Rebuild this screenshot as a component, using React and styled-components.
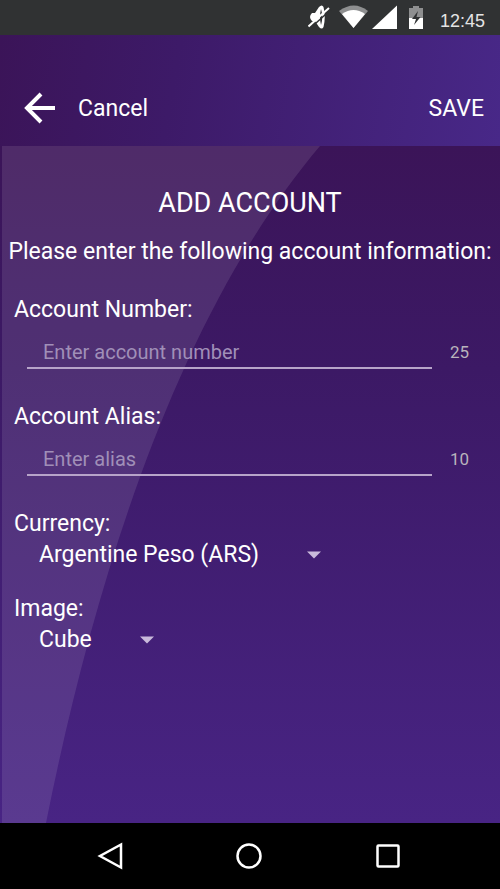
import React from "react";
import styled, { createGlobalStyle } from "styled-components";

const GlobalStyle = createGlobalStyle`
  *, *::before, *::after { box-sizing: border-box; }
  body {
    margin: 0;
    background: #000;
    color: #fff;
    font-family: Roboto, "Noto Sans", sans-serif;
    font-size: 23px;
    line-height: 28px;
  }
  button, input, select { font: inherit; color: inherit; }
`;

const Screen = styled.div`
  display: flex;
  flex-direction: column;
  min-height: 100vh;
`;

const StatusBar = styled.div`
  display: flex;
  align-items: center;
  justify-content: flex-end;
  height: 35px;
  padding-right: 15px;
  background: #303233;
`;

const StatusIcons = styled.svg`
  display: block;
  margin-right: 14px;
`;

const Clock = styled.time`
  padding-top: 6px;
  color: #e4e4e4;
  font-family: "Liberation Sans", Arial, sans-serif;
  font-size: 18px;
`;

const AppBar = styled.header`
  display: flex;
  align-items: flex-end;
  justify-content: space-between;
  height: 111px;
  padding: 0 16px 20px 24px;
  background: linear-gradient(100deg, #3b1458 0%, #3d1a68 35%, #482888 100%);
`;

const BarButton = styled.button`
  display: flex;
  align-items: center;
  gap: 22px;
  height: 36px;
  padding: 0;
  border: 0;
  background: none;
  cursor: pointer;
`;

const BarText = styled.span`
  padding-top: 2px;
`;

const Content = styled.main`
  position: relative;
  isolation: isolate;
  flex: 1;
  padding: 41px 14px;
  background: linear-gradient(#3b1458 0%, #3c1965 33%, #482484 100%);
`;

const Swoosh = styled.svg`
  position: absolute;
  inset: 0;
  z-index: -1;
  width: 100%;
  height: 100%;
`;

const Title = styled.h1`
  margin: 0;
  font-size: 27px;
  font-weight: 400;
  line-height: 32px;
  text-align: center;
`;

const Intro = styled.p`
  margin: 19px -14px 30px;
  text-align: center;
`;

const Field = styled.div`
  margin-bottom: ${(p) => (p.$spacing === "wide" ? "34px" : "23px")};
`;

const Label = styled.label`
  display: block;
`;

const InputRow = styled.div`
  display: flex;
  align-items: center;
  gap: 18px;
  padding: 0 17px 0 13px;
`;

const TextInput = styled.input`
  flex: 1;
  min-width: 0;
  height: 45px;
  padding: 12px 16px 0;
  border: 0;
  border-bottom: 2px solid #b7a4c9;
  border-radius: 0;
  background: none;
  font-size: 20px;
  &::placeholder {
    color: #a08fb8;
    opacity: 1;
  }
`;

const Counter = styled.output`
  padding-top: 10px;
  color: #b9b3bc;
  font-size: 17px;
  line-height: 20px;
`;

const SelectWrap = styled.div`
  display: grid;
  width: fit-content;
  align-items: center;
  margin-left: 25px;
`;

const Select = styled.select`
  grid-area: 1 / 1;
  field-sizing: content;
  height: 34px;
  padding: 0 62px 0 0;
  border: 0;
  background: none;
  appearance: none;
  cursor: pointer;
  option { color: #222; }
`;

const Caret = styled.svg`
  grid-area: 1 / 1;
  justify-self: end;
  pointer-events: none;
`;

const NavBar = styled.nav`
  display: grid;
  grid-template-columns: repeat(3, 139px);
  justify-content: center;
  height: 66px;
  padding-right: 2px;
  background: #000;
`;

const NavButton = styled.button`
  display: grid;
  place-items: center;
  padding: 0;
  border: 0;
  background: none;
  cursor: pointer;
`;

function TextField({ id, label, placeholder, limit }) {
  return (
    <Field $spacing="wide">
      <Label htmlFor={id}>{label}</Label>
      <InputRow>
        <TextInput id={id} type="text" placeholder={placeholder} maxLength={limit} />
        <Counter htmlFor={id}>{limit}</Counter>
      </InputRow>
    </Field>
  );
}

function SelectField({ id, label, option }) {
  return (
    <Field>
      <Label htmlFor={id}>{label}</Label>
      <SelectWrap>
        <Select id={id}>
          <option>{option}</option>
        </Select>
        <Caret width="14" height="8" viewBox="0 0 14 8" aria-hidden="true">
          <path d="M0 0.5H14L7 7.5Z" fill="#c9badb" />
        </Caret>
      </SelectWrap>
    </Field>
  );
}

export default function App() {
  return (
    <Screen>
      <GlobalStyle />
      <StatusBar>
        <StatusIcons width="118" height="35" viewBox="0 0 118 35" aria-hidden="true">
          <g fill="#fff">
            <path d="M4 13H7L11 7Q14 4 15.500 7Q18 17 15.500 27Q14 30 11 27L7 21H4Q0 17 4 13Z" />
            <path d="M13 9Q15.500 17 13 25Q11 17 13 9Z" fill="#303233" />
            <path d="M2.500 28L23 9.500" stroke="#303233" strokeWidth="1.500" />
            <path d="M0.500 26.500L21 8" stroke="#fff" strokeWidth="2" />
            <path d="M31 11Q46 0 60 11L45.500 28Z" fill="#8e8f90" />
            <path d="M34 14Q45.500 6 57 14L45.500 28Z" />
            <path d="M64 29L89 5.500V29Z" />
            <path d="M101 8H105V6H111V8H115V18H101Z" fill="#8e8f90" />
            <path d="M101 18H115V29H101Z" />
            <path d="M110 11L104 19H108L106 25L112.500 17H108.500Z" fill="#303233" />
          </g>
        </StatusIcons>
        <Clock>12:45</Clock>
      </StatusBar>

      <AppBar>
        <BarButton type="button">
          <svg width="32" height="32" viewBox="0 0 32 32" fill="none" stroke="#fff" strokeWidth="4" aria-hidden="true">
            <path d="M17 2L3 16L17 30M3 16H31" />
          </svg>
          <BarText>Cancel</BarText>
        </BarButton>
        <BarButton type="button">
          <BarText>SAVE</BarText>
        </BarButton>
      </AppBar>

      <Content>
        <Swoosh viewBox="0 0 500 677" preserveAspectRatio="none" aria-hidden="true">
          <path d="M2 0H320C176 170 94 437 46 677H2Z" fill="#fff" fillOpacity="0.1" />
        </Swoosh>
        <Title>ADD ACCOUNT</Title>
        <Intro>Please enter the following account information:</Intro>
        <form>
          <TextField id="number" label="Account Number:" placeholder="Enter account number" limit={25} />
          <TextField id="alias" label="Account Alias:" placeholder="Enter alias" limit={10} />
          <SelectField id="currency" label="Currency:" option="Argentine Peso (ARS)" />
          <SelectField id="image" label="Image:" option="Cube" />
        </form>
      </Content>

      <NavBar>
        <NavButton type="button" aria-label="Back">
          <svg width="26" height="28" viewBox="0 0 26 28" fill="none" stroke="#fff" strokeWidth="2.500">
            <path d="M24 2.500V25.500L3 14Z" />
          </svg>
        </NavButton>
        <NavButton type="button" aria-label="Home">
          <svg width="26" height="26" viewBox="0 0 26 26" fill="none" stroke="#fff" strokeWidth="2.500">
            <circle cx="13" cy="13" r="11.500" />
          </svg>
        </NavButton>
        <NavButton type="button" aria-label="Recent apps">
          <svg width="24" height="24" viewBox="0 0 24 24" fill="none" stroke="#fff" strokeWidth="2.500">
            <rect x="1.500" y="1.500" width="21" height="21" rx="1" />
          </svg>
        </NavButton>
      </NavBar>
    </Screen>
  );
}
